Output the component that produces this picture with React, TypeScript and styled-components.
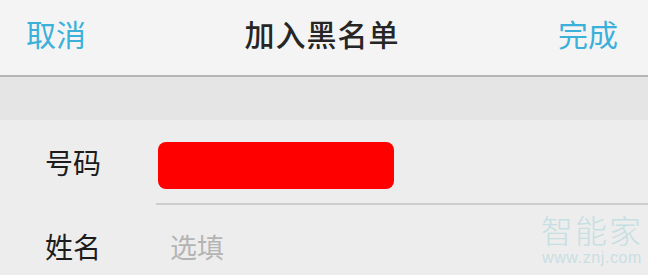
import styled, { createGlobalStyle } from "styled-components";

const GlobalStyle = createGlobalStyle`
   html, body {
      margin: 0;
      padding: 0;
      background: #ededed;
   }
   body {
      font-family: "Noto Sans CJK SC", "Liberation Sans", sans-serif;
   }
`;

const Screen = styled.div`
   position: relative;
   width: 648px;
   height: 275px;
   overflow: hidden;
   background: #ededed;
`;

const NavBar = styled.header`
   height: 77px;
   display: grid;
   grid-template-columns: 1fr auto 1fr;
   align-items: center;
   padding: 0 30px 10px 26px;
   background: #f4f4f4;
   border-bottom: 2px solid #b5b5b5;
   box-sizing: border-box;
`;

const NavAction = styled.button<{ $align: "left" | "right" }>`
   justify-self: ${(p) => (p.$align === "left" ? "start" : "end")};
   border: 0;
   background: none;
   padding: 0;
   font-family: inherit;
   font-size: 30px;
   line-height: 1;
   color: #3bb0da;
   cursor: pointer;
`;

const Title = styled.h1`
   margin: 0;
   font-size: 30px;
   line-height: 1;
   font-weight: 500;
   color: #262626;
   letter-spacing: 1px;
`;

const Spacer = styled.div`
   height: 43px;
   background: #e5e5e5;
`;

const Form = styled.div`
   display: flex;
   flex-direction: column;
`;

const Row = styled.div<{ $divider?: boolean; $height: number; $offset: number }>`
   display: flex;
   align-items: center;
   height: ${(p) => p.$height}px;
   padding-top: ${(p) => p.$offset}px;
   margin-left: 156px;
   position: relative;
   border-bottom: ${(p) => (p.$divider ? "2px solid #cdcdcd" : "none")};
   box-sizing: border-box;
`;

const Label = styled.span`
   position: absolute;
   left: -111px;
   font-size: 28px;
   line-height: 1;
   color: #1c1c1c;
`;

const Redacted = styled.div`
   width: 236px;
   height: 47px;
   border-radius: 8px;
   background: #fe0000;
   margin-left: 2px;
   margin-top: 8px;
`;

const Placeholder = styled.span`
   margin-left: 14px;
   font-size: 27px;
   line-height: 1;
   color: #b4b4b4;
`;

const Watermark = styled.div`
   position: absolute;
   right: 5px;
   bottom: 9px;
   display: flex;
   flex-direction: column;
   align-items: center;
   gap: 4px;
   color: #c6dfe2;
`;

const WatermarkBrand = styled.span`
   font-size: 32px;
   line-height: 34px;
   font-weight: 300;
   letter-spacing: 2px;
`;

const WatermarkUrl = styled.span`
   font-family: "Liberation Sans", sans-serif;
   font-size: 16px;
   line-height: 16px;
   letter-spacing: 0.6px;
   color: #c9dfe2;
`;

export default function App() {
   return (
      <>
         <GlobalStyle />
         <Screen>
            <NavBar>
               <NavAction $align="left">取消</NavAction>
               <Title>加入黑名单</Title>
               <NavAction $align="right">完成</NavAction>
            </NavBar>
            <Spacer />
            <Form>
               <Row $divider $height={85} $offset={0}>
                  <Label>号码</Label>
                  <Redacted />
               </Row>
               <Row $height={70} $offset={12}>
                  <Label>姓名</Label>
                  <Placeholder>选填</Placeholder>
               </Row>
            </Form>
            <Watermark>
               <WatermarkBrand>智能家</WatermarkBrand>
               <WatermarkUrl>www.znj.com</WatermarkUrl>
            </Watermark>
         </Screen>
      </>
   );
}
